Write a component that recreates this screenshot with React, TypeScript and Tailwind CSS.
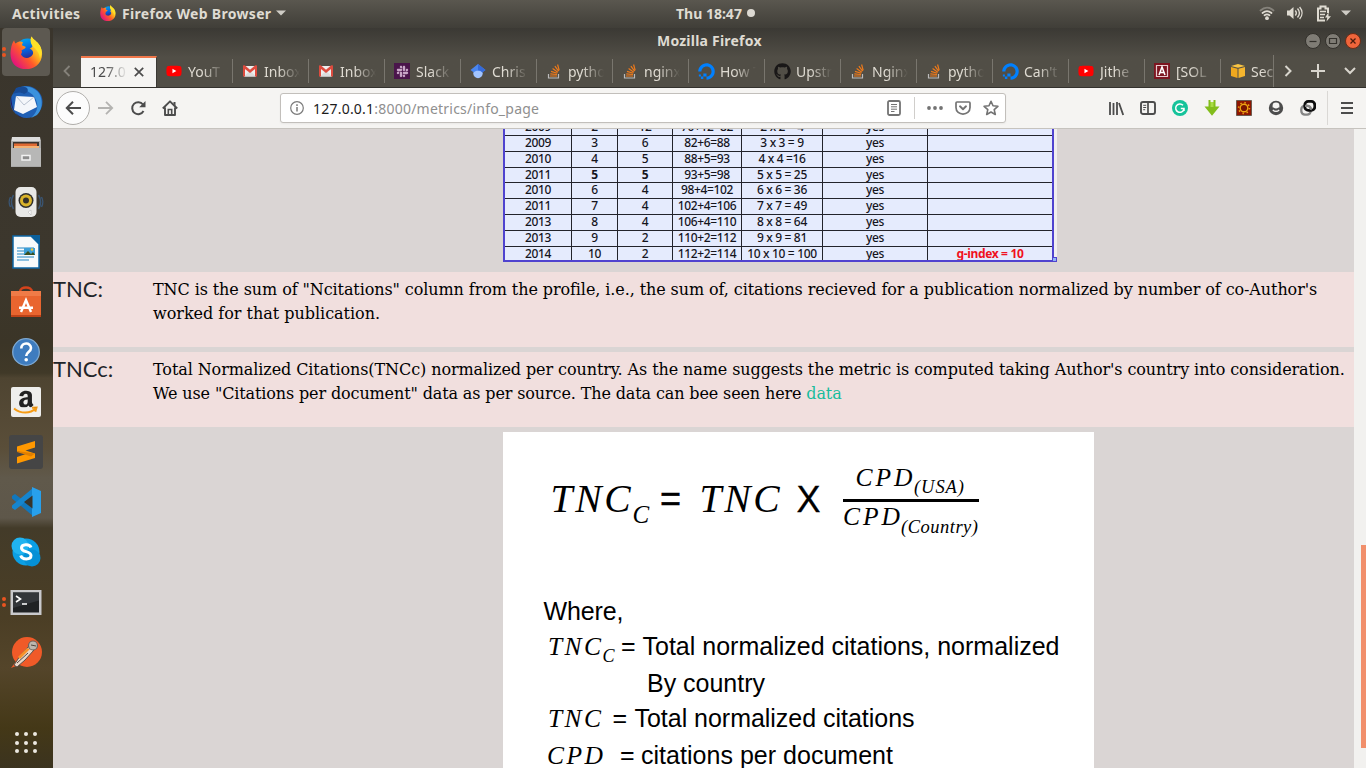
import React from "react";
import {
  FaAmazon,
  FaDigitalOcean,
  FaGithub,
  FaSlack,
  FaYoutube,
} from "react-icons/fa";

const FirefoxLogo = ({ size }: { size: number }) => (
  <svg width={size} height={size} viewBox="0 0 32 32">
    <defs>
      <linearGradient id="ffBody" x1="0.9" y1="0.1" x2="0.1" y2="0.8">
        <stop offset="0" stopColor="#fff44f" />
        <stop offset="0.35" stopColor="#ffb01c" />
        <stop offset="0.6" stopColor="#ff5a2a" />
        <stop offset="1" stopColor="#e3157a" />
      </linearGradient>
      <linearGradient id="ffGlobe" x1="0" y1="0" x2="0.3" y2="1">
        <stop offset="0" stopColor="#00b3f4" />
        <stop offset="0.6" stopColor="#0a5bd8" />
        <stop offset="1" stopColor="#3b1d7a" />
      </linearGradient>
    </defs>
    <circle cx="17" cy="14" r="11.5" fill="url(#ffGlobe)" />
    <path
      d="M21 0.5c1 3 5 4 8 9 4 7 2 15-3 19-6 5-15 5-21 0C0 24 0 16 1 12c.3-3 1.500-6 3-8 .2 1.500.8 2.500 1.600 3.200C8 5 11 5.200 12.500 6l-1 3 3.500 1.500c.7 1.500-2.500 2.500-4 3.500 1 .5.5 3-.5 3.500 2 5 9 5 11.500.5 1.200-3-.5-5-3-6 4-.5 3-4 1.500-7-.5-2-.300-3.500.5-4.500z"
      fill="url(#ffBody)"
    />
    <path d="M21 .5c1 3 5 4 8 9 2.500 5 1.500 9 0 12-.5-4-2-7-6-10.500-3-3-4-7-2-10.500z" fill="#ffe226" />
  </svg>
);

const Gmail = () => (
  <svg width="16" height="16" viewBox="0 0 16 16">
    <path d="M2 3h12v10.500H2z" fill="#eee" />
    <path d="M2 13.500l6-6 6 6z" fill="#dcdcdc" />
    <path d="M1 3.200v10.300h2V6l5 4 5-4v7.500h2V3.200C15 2 13.800 2 13 2.600L8 6.700 3 2.600C2.200 2 1 2 1 3.200z" fill="#dd4b3e" />
  </svg>
);

const Youtube = () => <FaYoutube size={16} color="#ff0000" className="bg-[linear-gradient(#fff,#fff)] bg-[length:6px_6px] bg-center bg-no-repeat" />;

const Slack = () => (
  <span className="flex size-4 items-center justify-center bg-[#4a154b]">
    <FaSlack size={13} color="#c9a8c8" />
  </span>
);

const Scholar = () => (
  <svg width="16" height="16" viewBox="0 0 16 16">
    <circle cx="8" cy="10.500" r="4.700" fill="#a0c3ff" />
    <path d="M8 1L.5 7l3.300 2.500C5 7 11 7 12.200 9.500L15.500 7z" fill="#4a86f0" />
    <path d="M8 1l7.500 6-3.300 2.500C11.500 7.800 10 7.300 8 7.200z" fill="#356ad8" />
  </svg>
);

const Stack = () => (
  <svg width="16" height="16" viewBox="0 0 16 16" fill="none">
    <path d="M2.500 11v4h10v-4" stroke="#bcbbbb" strokeWidth="1.200" />
    <path d="M4 13h7M4.300 10.800l6.700.7M5 8.400l6.300 1.900M6.600 5.600l5.200 3.600M8.900 3.200l3.700 5M11.600 1.500l1.600 5.800" stroke="#ef7a1a" strokeWidth="1.200" />
  </svg>
);

const Ocean = () => <FaDigitalOcean size={17} color="#0080ff" />;
const Github = () => <FaGithub size={17} color="#191717" />;

const RedA = () => (
  <svg width="16" height="16" viewBox="0 0 16 16">
    <path d="M0 0h16v16H0z" fill="#7c1520" />
    <path d="M2.500 2.500h11v11h-11z" fill="none" stroke="#e8c9ce" strokeWidth="1.200" />
    <path d="M5 12l3-8 3 8M6 9.500h4" fill="none" stroke="#fff" strokeWidth="1.500" />
  </svg>
);

const Cube = () => (
  <svg width="16" height="16" viewBox="0 0 16 16">
    <path d="M1 3l7-2 7 2-7 1.700z" fill="#f9c443" />
    <path d="M1 4l6.500 1.700V15L1 13z" fill="#f0a81e" />
    <path d="M15 4L8.500 5.700V15l6.500-2z" fill="#f5b52e" />
  </svg>
);

const tabs: { icon: () => React.ReactElement; label: string }[] = [
  { icon: Youtube, label: "YouT" },
  { icon: Gmail, label: "Inbox" },
  { icon: Gmail, label: "Inbox" },
  { icon: Slack, label: "Slack" },
  { icon: Scholar, label: "Chris" },
  { icon: Stack, label: "pytho" },
  { icon: Stack, label: "nginx" },
  { icon: Ocean, label: "How T" },
  { icon: Github, label: "Upstr" },
  { icon: Stack, label: "Nginx" },
  { icon: Stack, label: "pytho" },
  { icon: Ocean, label: "Can't" },
  { icon: Youtube, label: "Jithe" },
  { icon: RedA, label: "[SOL" },
];

const ui = "font-['Noto_Sans','Open_Sans',sans-serif]";

function TopBar() {
  return (
    <header className="flex h-[28px] shrink-0 items-center bg-linear-to-b from-[#5a574f] to-[#403e38] pb-[2px] text-[14px] font-bold text-[#dfdbd2]">
      <div className="flex w-[676px] items-center pl-[12px]">
        <span className="w-[88px] tracking-[0.35px]">Activities</span>
        <FirefoxLogo size={16} />
        <span className="w-[160px] pl-[6px] whitespace-nowrap tracking-[0.320px]">Firefox Web Browser</span>
        <svg width="10" height="6" viewBox="0 0 10 6"><path d="M0 0.500h10L5 5.500z" fill="#cfccc5" /></svg>
      </div>
      <div className="flex flex-1 items-center gap-[4px]">
        <span className="w-[67px] whitespace-nowrap">Thu 18:47</span>
        <span className="size-[8px] rounded-full bg-[#dcd9d2]" />
      </div>
      <div className="flex items-center pr-[15px]">
        <svg width="16" height="16" viewBox="0 0 16 16" fill="none" strokeLinecap="round">
          <path d="M1.500 5.500c4-3.700 9-3.700 13 0" stroke="#85827b" strokeWidth="1.800" />
          <path d="M3.500 8c3-2.500 6-2.500 9 0M5.500 10.300c1.800-1.300 3.200-1.300 5 0" stroke="#dfdbd2" strokeWidth="1.700" />
          <circle cx="8" cy="13.200" r="1.900" fill="#dfdbd2" />
        </svg>
        <svg className="ml-[11px]" width="17" height="16" viewBox="0 0 17 16" fill="none" stroke="#dfdbd2" strokeWidth="1.400">
          <path d="M1 5.500h2.500L7.500 2v12l-4-3.500H1z" fill="#dfdbd2" stroke="none" />
          <path d="M9.300 5.500c1.200 1.500 1.200 3.500 0 5M11.500 3.500c2.400 2.800 2.400 6.200 0 9M13.600 2c3.200 3.600 3.200 8.400 0 12" />
        </svg>
        <svg className="ml-[13px]" width="16" height="17" viewBox="0 0 16 17">
          <path d="M9 15.500H2v-12h2.500V1.500h5v2H12V8" fill="none" stroke="#dfdbd2" strokeWidth="2" />
          <path d="M4 6.500h6M4 9.500h5M4 12.500h4" stroke="#dfdbd2" strokeWidth="1.500" />
          <path d="M12.500 7.500L9 12.500h2.300L10.500 16.500l4.500-5.300h-2.500z" fill="#dfdbd2" />
        </svg>
        <svg className="ml-[9px]" width="10" height="6" viewBox="0 0 10 6"><path d="M0 .5h10L5 5.500z" fill="#cfccc5" /></svg>
      </div>
    </header>
  );
}

const dockIcons: React.ReactElement[] = [
  <FirefoxLogo size={33} />,
  <svg width="36" height="36" viewBox="0 0 36 36">
    <circle cx="18.500" cy="18" r="16" fill="#1f5fb4" />
    <path d="M9 5c7-5 19-2 23 6 3 7 2 15-3 20l-6 3c6-5 7-11 6-15C27 10 19 5 9 5z" fill="#3b92dd" />
    <path d="M3 12c1 9 1 15 9 21l8 2C9 33 1 25 3 12z" fill="#24185c" />
    <path d="M8 12l18 1 3 10-14 7-9-4z" fill="#f4f6fa" />
    <path d="M8 12l8 9 10-8" fill="none" stroke="#b9c2d0" strokeWidth="1" />
    <path d="M8 4c4-2 8-2 11 0 2 3 0 5-3 6-3-2-7-2-11 0z" fill="#174a94" />
  </svg>,
  <svg width="32" height="32" viewBox="0 0 32 32">
    <path d="M2 1h28l1 5H1z" fill="#ddd" /><path d="M1 5h30v26H1z" fill="#a9a9a8" />
    <path d="M3 6h26v7H3z" fill="#3c3530" /><path d="M4 7.500h23v3H4z" fill="#e06a33" /><path d="M4 10h25v2H4z" fill="#f3b274" />
    <path d="M1 12h30v18H1z" fill="#b7b7b6" /><path d="M12 19.500h8v4.500h-8z" fill="#8d8d8d" stroke="#f2f2f2" strokeWidth="1.500" />
  </svg>,
  <svg width="36" height="34" viewBox="0 0 36 34">
    <path d="M5.500 10c-3 5-3 9 0 14M2.500 12c-2 4-2 6 0 10M30.500 10c3 5 3 9 0 14M33.500 12c2 4 2 6 0 10" fill="none" stroke="#3a5573" strokeWidth="1.500" />
    <rect x="7.500" y="2" width="21" height="30" rx="5" fill="#e8e8e6" />
    <circle cx="18" cy="15.500" r="7.500" fill="#2f2f2d" /><circle cx="18" cy="15.500" r="6" fill="#d9b32a" /><circle cx="18" cy="15.500" r="3" fill="#33302a" />
    <path d="M20 27l3-2v5z" fill="#fff" stroke="#bbb" strokeWidth=".6" />
  </svg>,
  <svg width="28" height="34" viewBox="0 0 28 34">
    <path d="M1 1h18l8 8v24H1z" fill="#f8fafb" stroke="#0c65a4" strokeWidth="1.500" /><path d="M18 0h10v10z" fill="#0b609c" />
    <path d="M5 13h17M5 16h17M5 19h17M5 22h17M5 25h12" stroke="#68add8" strokeWidth="1.500" />
    <path d="M12 13h11v7H12z" fill="#3c9fd7" /><path d="M12 20l4-4 3 3 2-2 2 3z" fill="#385020" /><circle cx="20" cy="14.500" r="1.200" fill="#f5c33a" />
  </svg>,
  <svg width="32" height="34" viewBox="0 0 32 34">
    <path d="M10 7c0-6 12-6 12 0" fill="none" stroke="#d5431c" strokeWidth="2.500" /><path d="M1 6h30v26H1z" fill="#e9652f" /><path d="M1 6h30v5H1z" fill="#f07b47" /><path d="M1 30h30v2H1z" fill="#be4318" />
    <path d="M11 27l5-12 5 12M9 22.800h14" fill="none" stroke="#fff" strokeWidth="2.400" />
  </svg>,
  <svg width="30" height="30" viewBox="0 0 30 30">
    <circle cx="15" cy="15" r="13.300" fill="#3e7cbf" stroke="#7ea9d2" strokeWidth="1.300" />
    <path d="M10.300 11.500c0-6.500 9.700-6.500 9.700-.5 0 4-4.800 4-4.800 8" fill="none" stroke="#fff" strokeWidth="2.600" /><circle cx="15.200" cy="22.700" r="1.800" fill="#fff" />
  </svg>,
  <span className="flex size-[30px] items-center justify-center rounded-[2px] bg-[#eeeeec]">
    <FaAmazon size={26} color="#222" className="[clip-path:inset(0_0_30%_0)]" />
    <svg className="-ml-[27px]" width="28" height="28" viewBox="0 0 28 28" fill="none">
      <path d="M2 20.500c7 5.500 16 5.500 22-.3M20 19.800l4.500-.3-1.200 4.200" stroke="#f59b14" strokeWidth="2" />
    </svg>
  </span>,
  <span className="flex size-[34px] items-center justify-center rounded-[3px] bg-[#454545]">
    <svg width="20" height="24" viewBox="0 0 20 24">
      <path d="M1 6.500L19 1v6.500L9.500 10.500 19 13.500V18L1 23.500V17l9-3L1 11z" fill="#ff9800" />
      <path d="M1 11l18 2.500-4 3L1 12z" fill="#e07f00" />
    </svg>
  </span>,
  <svg width="30" height="30" viewBox="0 0 30 30">
    <path d="M1 9l3-2 18 14v8L1 11.500z" fill="#1177bd" /><path d="M1 21l3 2L22 9V1L1 18.500z" fill="#1585cf" /><path d="M21 0l9 4v22l-9 4z" fill="#28a0ec" /><path d="M21.500 8.500v13L13 15z" fill="#39342b" />
  </svg>,
  <svg width="30" height="30" viewBox="0 0 30 30">
    <circle cx="15" cy="15" r="13.500" fill="#0c9fe4" /><circle cx="9" cy="9" r="8.500" fill="#20b3f0" /><circle cx="21" cy="21" r="8.500" fill="#0590d6" />
    <path d="M20 10.500c-1.500-4-9.500-3.500-9.500.5 0 4.700 9.500 2.500 9.500 7.500 0 4.500-9 4.500-10.300 0" fill="none" stroke="#fff" strokeWidth="3" />
  </svg>,
  <svg className="mt-[2px]" width="32" height="28" viewBox="0 0 32 28">
    <path d="M.5 1h31v25H.5z" fill="#c9c9cc" /><path d="M3 3.500h26v20H3z" fill="#202224" /><path d="M3 3.500h26v8L3 19z" fill="#33363a" />
    <path d="M6 7l4.500 3L6 13M12 15h5" fill="none" stroke="#fff" strokeWidth="1.600" />
  </svg>,
  <svg className="mt-[2px]" width="34" height="34" viewBox="0 0 34 34">
    <circle cx="18" cy="16" r="15" fill="#f05a28" /><path d="M2 32l6-8 4 4z" fill="#f05a28" />
    <path d="M5 29l6-9L20 10l5 4-9 10-8 7z" fill="#e9d6c6" stroke="#58504a" strokeWidth="1" />
    <path d="M9 21l9-9 3 1-10 10z" fill="#f7922a" /><circle cx="24" cy="9.500" r="4.500" fill="#bdb6ae" stroke="#6b625b" strokeWidth="1.200" /><path d="M22 9l5 1M8 27l11-10" stroke="#4e4640" strokeWidth="1" />
  </svg>,
];

function Dock() {
  return (
    <nav className="flex w-[53px] shrink-0 flex-col bg-[linear-gradient(180deg,#3a352c_0px,#3c372d_230px,#3b3527_315px,#403928_345px,#4e4431_350px,#5a4e39_420px,#60594b_450px,#5e574a_490px,#433b29_500px,#4b3e25_590px,#54452a_640px,#443817_700px,#3b331f_740px)]">
      {dockIcons.map((icon, i) => (
        <div key={i} className={i === 0 ? "flex h-[49px] shrink-0 items-start" : "flex h-[50px] shrink-0 items-center"}>
          <span className="flex w-[2px] flex-col" />
          <div className={i === 0 ? "flex size-[48px] items-center rounded-[4px] bg-[#5d5951]" : "flex size-[48px] items-center"}>
            <span className="flex w-[4px] flex-col gap-[2px]">
              {(i === 0 || i === 11) && (
                <>
                  <i className="size-[4px] rounded-full bg-[#ea5420]" />
                  <i className="size-[4px] rounded-full bg-[#ea5420]" />
                </>
              )}
            </span>
            <span className="flex w-[40px] items-center justify-center">{icon}</span>
          </div>
        </div>
      ))}
      <div className="mt-[55px] ml-[15px] grid w-[22px] grid-cols-3 gap-[4.500px]">
        {Array.from({ length: 9 }, (_, i) => (
          <i key={i} className="size-[4px] rounded-full bg-[#ece9e2]" />
        ))}
      </div>
    </nav>
  );
}

function TitleAndTabs() {
  return (
    <div className="flex h-[60px] shrink-0 flex-col border-b border-[#33312d] bg-linear-to-b from-[#3b3934] from-0% to-[#514e46] to-50% text-[#dfdbd2]">
      <div className="flex h-[27px] items-center pb-[2px]">
        <span className="w-[604px] shrink-0" />
        <span className="w-[648px] shrink-0 text-[14px] font-bold whitespace-nowrap tracking-[0.220px]">Mozilla Firefox</span>
        <div className="flex shrink-0 gap-[4px]">
          <svg width="16" height="16" viewBox="0 0 16 16"><circle cx="8" cy="8" r="7.500" fill="#7f7c75" stroke="#33312c" /><path d="M4.500 8.500h7" stroke="#33312c" strokeWidth="1.200" /></svg>
          <svg width="16" height="16" viewBox="0 0 16 16"><circle cx="8" cy="8" r="7.500" fill="#7f7c75" stroke="#33312c" /><path d="M4.500 5.500h7v5h-7z" fill="none" stroke="#33312c" strokeWidth="1.200" /></svg>
          <svg width="16" height="16" viewBox="0 0 16 16"><circle cx="8" cy="8" r="7.500" fill="#f0653b" stroke="#6b2c17" /><path d="M5.500 5.500l5 5M10.500 5.500l-5 5" stroke="#4c1c0d" strokeWidth="1.300" /></svg>
        </div>
      </div>
      <div className="flex h-[32px] text-[14px]">
        <div className="flex w-[28px] shrink-0 items-center justify-center">
          <svg width="8" height="12" viewBox="0 0 8 12"><path d="M6.500 1L1.500 6l5 5" fill="none" stroke="#85827b" strokeWidth="1.800" /></svg>
        </div>
        <div className="mt-px flex w-[76px] shrink-0 items-center border-t-2 border-r border-t-[#f0774a] border-r-[#3b3934] bg-[#f5f4f2] pb-[2px] pl-[9px] text-[#4a4a4a]">
          <span className="w-[38px] whitespace-nowrap [mask-image:linear-gradient(90deg,#000_40%,transparent_100%)]">127.0</span>
          <svg className="ml-[6px]" width="10" height="10" viewBox="0 0 10 10"><path d="M.8.8l8.400 8.400M9.200.8L.8 9.200" stroke="#4c4c4c" strokeWidth="1.700" /></svg>
        </div>
        {tabs.map(({ icon: Icon, label }, i) => (
          <div key={i} className="flex w-[76px] shrink-0 items-center">
            <div className="flex w-[75px] items-center pl-[9px]">
              <span className="flex w-[22px] items-center"><Icon /></span>
              <span className="w-[36px] whitespace-nowrap [mask-image:linear-gradient(90deg,#000_40%,transparent_100%)]">{label}</span>
            </div>
            <span className="h-[24px] w-px bg-[#79766e]" />
          </div>
        ))}
        <div className="flex w-[53px] shrink-0 items-center border-r border-[#79766e] pl-[9px]">
          <span className="flex w-[21px] items-center"><Cube /></span>
          <span className="w-[22px] whitespace-nowrap [mask-image:linear-gradient(90deg,#000_50%,#0006_100%)]">Sec</span>
        </div>
        <div className="flex flex-1 items-center pl-[10px] text-[#d8d5cd]">
          <svg width="9" height="12" viewBox="0 0 9 12"><path d="M1.500 1l5 5-5 5" fill="none" stroke="#d8d5cd" strokeWidth="2" /></svg>
          <svg className="ml-[18px]" width="14" height="14" viewBox="0 0 14 14"><path d="M7 0v14M0 7h14" stroke="#d8d5cd" strokeWidth="2" /></svg>
          <svg className="ml-[19px]" width="12" height="8" viewBox="0 0 12 8"><path d="M1 1l5 5 5-5" fill="none" stroke="#d8d5cd" strokeWidth="2" /></svg>
        </div>
      </div>
    </div>
  );
}

function Toolbar() {
  return (
    <div className="flex h-[41px] shrink-0 items-center border-b border-[#c6c3be] bg-[#f5f4f2] pl-[3px]">
      <span className="flex size-[34px] items-center justify-center rounded-full border border-[#b0aeab] bg-[#fcfcfc]">
        <svg width="16" height="14" viewBox="0 0 16 14"><path d="M8 .8L1.800 7 8 13.200M2 7h14" fill="none" stroke="#4c4c4c" strokeWidth="2" /></svg>
      </span>
      <svg className="ml-[8px]" width="16" height="14" viewBox="0 0 16 14"><path d="M8 .8L14.200 7 8 13.200M14 7H0" fill="none" stroke="#b4b3b1" strokeWidth="1.800" /></svg>
      <svg className="ml-[16px]" width="16" height="16" viewBox="0 0 16 16"><path d="M13.500 11A6 6 0 1 1 13 4.500" fill="none" stroke="#4c4c4c" strokeWidth="2" /><path d="M15.500 1v6.300H9.200z" fill="#4c4c4c" /></svg>
      <svg className="ml-[16px]" width="16" height="16" viewBox="0 0 16 16"><path d="M.8 8.500L8 1.300l7.200 7.200M3 7.500V15h10V7.500" fill="none" stroke="#4c4c4c" strokeWidth="1.900" strokeLinejoin="round" /><path d="M6.300 14.500v-5h3.400v5" fill="none" stroke="#4c4c4c" strokeWidth="1.600" /><path d="M11.500 2h2v4l-2-2z" fill="#4c4c4c" /></svg>
      <div className="ml-[102px] flex h-[30px] w-[726px] items-center rounded-[3px] border border-[#c2bfbb] bg-white pl-[9px] shadow-xs">
        <svg width="14" height="14" viewBox="0 0 14 14"><circle cx="7" cy="7" r="6.300" fill="none" stroke="#7b7b7b" strokeWidth="1.200" /><path d="M7 6v4.500M7 3.300v1.600" stroke="#7b7b7b" strokeWidth="1.500" /></svg>
        <span className="ml-[9px] w-[574px] text-[14px] tracking-[0.220px] whitespace-nowrap text-[#8f8f8f]"><b className="font-normal text-[#1c1c1c]">127.0.0.1</b>:8000/metrics/info_page</span>
        <svg width="14" height="16" viewBox="0 0 14 16"><rect x="1" y="1" width="12" height="14" rx="1.500" fill="none" stroke="#737373" strokeWidth="1.800" /><path d="M4 4.500h6M4 6.800h6M4 9.200h6M4 11.500h3.500" stroke="#737373" strokeWidth="1" /></svg>
        <span className="ml-[13px] h-[22px] w-px bg-[#d0cecb]" />
        <svg className="ml-[12px]" width="16" height="4" viewBox="0 0 16 4" fill="#737373"><circle cx="2" cy="2" r="1.900" /><circle cx="8" cy="2" r="1.900" /><circle cx="14" cy="2" r="1.900" /></svg>
        <svg className="ml-[12px]" width="16" height="14" viewBox="0 0 16 14" fill="none" stroke="#737373" strokeLinecap="round" strokeLinejoin="round"><path d="M2 1h12c.6 0 1 .4 1 1v4.500c0 8.700-14 8.700-14 0V2c0-.6.4-1 1-1z" strokeWidth="1.700" /><path d="M5 5.300l3 2.900 3-2.900" strokeWidth="1.900" /></svg>
        <svg className="ml-[12px]" width="16" height="16" viewBox="0 0 16 16"><path d="M8 1.300l2 4.500 4.900.5-3.700 3.300 1.100 4.900L8 12l-4.300 2.500 1.100-4.900L1.100 6.300 6 5.800z" fill="none" stroke="#737373" strokeWidth="1.600" strokeLinejoin="round" /></svg>
      </div>
      <div className="ml-[102px] flex items-center gap-[16px]">
        <svg width="16" height="16" viewBox="0 0 16 16"><path d="M2 2v13M5.500 3v12M9 2v13M11 3l4.200 12" stroke="#4c4c4c" strokeWidth="1.800" /></svg>
        <svg width="16" height="16" viewBox="0 0 16 16"><rect x="1" y="2" width="14" height="12" rx="2" fill="none" stroke="#4c4c4c" strokeWidth="1.900" /><path d="M8 2v12" stroke="#4c4c4c" strokeWidth="1.700" /><path d="M3.200 5.300h3M3.200 7.500h3M3.200 9.700h2" stroke="#4c4c4c" strokeWidth="1" /></svg>
        <svg width="16" height="16" viewBox="0 0 16 16"><circle cx="8" cy="8" r="8" fill="#15c39a" /><path d="M11 5.300A4.200 4.200 0 1 0 12 9M8.800 8.500H12V11" fill="none" stroke="#fff" strokeWidth="1.500" /></svg>
        <svg width="16" height="16" viewBox="0 0 16 16"><path d="M4.500 0v6.500H.5L8 15.800 15.500 6.500h-4V0h-2v2h-3V0z" fill="#83bd1c" /><path d="M6.500 2h3v5h-3z" fill="#a8dc45" /></svg>
        <svg width="16" height="16" viewBox="0 0 16 16"><path d="M.5.500h15v15H.5z" fill="#8e1500" stroke="#6b5a50" /><circle cx="8" cy="8" r="3.800" fill="#7a1500" stroke="#eea512" strokeWidth="1.400" /><circle cx="8" cy="8" r="5.400" fill="none" stroke="#eea512" strokeWidth="1.600" strokeDasharray="1.400 2.800" /></svg>
        <svg width="16" height="16" viewBox="0 0 16 16"><circle cx="8" cy="8" r="7.200" fill="#4c4c4c" /><rect x="4.600" y="2.600" width="6.800" height="7.600" rx="3.200" fill="#f5f4f2" /><path d="M3 7.500h2.500c1.500 1.200 3.500 1.200 5 0H13v1.500c-1 .3-2 1-2.500 1.200h-5C5 10 4 9.300 3 9z" fill="#4c4c4c" /><path d="M4.800 9.800c1.800 2.200 4.600 2.200 6.400 0" fill="none" stroke="#f5f4f2" strokeWidth="1.300" /></svg>
        <svg width="16" height="16" viewBox="0 0 16 16" fill="none"><rect x="1.300" y="5.800" width="9.400" height="8.800" rx="3.500" stroke="#858585" strokeWidth="2.300" /><rect x="4.800" y="1.400" width="10" height="9" rx="3.500" stroke="#0c0c0d" strokeWidth="2.800" /><path d="M5 5.800h3c2.500.3 3 2 2.700 4.200" stroke="#858585" strokeWidth="2.200" /></svg>
      </div>
      <span className="ml-[11px] h-[34px] w-px bg-[#dad8d5]" />
      <svg className="ml-[13px]" width="12" height="12" viewBox="0 0 12 12"><path d="M0 1h12M0 6h12M0 11h12" stroke="#4c4c4c" strokeWidth="2" /></svg>
    </div>
  );
}

const rows: string[][] = [
  ["2009", "3", "6", "82+6=88", "3 x 3 = 9", "yes", ""],
  ["2010", "4", "5", "88+5=93", "4 x 4 =16", "yes", ""],
  ["2011", "5", "5", "93+5=98", "5 x 5 = 25", "yes", ""],
  ["2010", "6", "4", "98+4=102", "6 x 6 = 36", "yes", ""],
  ["2011", "7", "4", "102+4=106", "7 x 7 = 49", "yes", ""],
  ["2013", "8", "4", "106+4=110", "8 x 8 = 64", "yes", ""],
  ["2013", "9", "2", "110+2=112", "9 x 9 = 81", "yes", ""],
  ["2014", "10", "2", "112+2=114", "10 x 10 = 100", "yes", "g-index = 10"],
];

const rowGrid = "grid shrink-0 grid-cols-[67px_46px_55px_69px_81px_105px_124px]";

function Row({ cells, className }: { cells: string[]; className: string }) {
  const boldRow = cells[1] === "5";
  return (
    <div className={`${rowGrid} ${className}`}>
      {cells.map((c, i) => (
        <span
          key={i}
          className={`flex items-center justify-center pb-[1px] leading-[12px] whitespace-nowrap ${i < 6 ? "border-r border-[#22232b]" : "font-bold text-[#f01020]"} ${boldRow && (i === 1 || i === 2) ? "font-bold" : ""}`}
        >
          {c}
        </span>
      ))}
    </div>
  );
}

function IndexTable() {
  return (
    <div className="relative ml-[450px] flex h-[133px] w-[554px] shrink-0 bg-[#f0eeef]">
      <div className="flex w-[551px] flex-col overflow-hidden border-x-2 border-b-2 border-[#4f43cf] bg-[#e5ebfd] font-['Noto_Sans','Open_Sans',sans-serif] text-[12px] font-medium tracking-[-0.350px] text-[#15151d]">
        <div className="flex h-[7px] shrink-0 flex-col justify-end overflow-hidden border-b border-[#22232b]">
          <Row cells={["2009", "2", "12", "70+12=82", "2 x 2 = 4", "yes", ""]} className="h-[15px]" />
        </div>
        {rows.map((r, i) => (
          <Row key={i} cells={r} className={i === 7 ? "h-[15px]" : i === 2 ? "h-[15px] border-b border-[#22232b]" : "h-[16px] border-b border-[#22232b]"} />
        ))}
      </div>
      <i className="absolute right-0 bottom-0 size-[5px] border border-[#4f43cf] bg-[#8fb4f5]" />
    </div>
  );
}

function Entry({ term, children }: { term: string; children: React.ReactNode }) {
  return (
    <section className="mb-[5px] flex h-[75px] shrink-0 bg-[#f1dfde] pt-[6px]">
      <h4 className="-mt-[2px] w-[100px] shrink-0 font-['Lato',sans-serif] text-[22px] leading-[26px] text-[#212529]">{term}</h4>
      <p className="font-['DejaVu_Serif',serif] text-[16px] leading-[24px] tracking-[-0.090px] whitespace-nowrap text-black">{children}</p>
    </section>
  );
}

function FormulaFigure() {
  const it = { fontFamily: "Liberation Serif", fontStyle: "italic" } as const;
  const sans = { fontFamily: "Liberation Sans" } as const;
  return (
    <svg className="ml-[450px] shrink-0 bg-white" width="591" height="336" viewBox="503 432 591 336" fill="#000">
      <g {...it} fontSize="39.500">
        <text x="550.500" y="512" textLength="80">TNC</text>
        <text x="699.500" y="512" textLength="80">TNC</text>
        <text x="632.500" y="523" fontSize="25">C</text>
        <g fontSize="25.500">
          <text x="855.500" y="486" textLength="57">CPD</text>
          <text x="843" y="525" textLength="57">CPD</text>
        </g>
        <g fontSize="18.500">
          <text x="914" y="493" textLength="50">(USA)</text>
          <text x="901" y="533" textLength="77">(Country)</text>
        </g>
        <g fontSize="25.500">
          <text x="548" y="655" textLength="53">TNC</text>
          <text x="602.500" y="662" fontSize="18">C</text>
          <text x="548" y="727" textLength="53">TNC</text>
          <text x="547" y="764" textLength="56">CPD</text>
        </g>
      </g>
      <g {...sans} fontSize="36">
        <text x="660" y="511" stroke="#000" strokeWidth="0.500">=</text>
        <text x="796.500" y="512" stroke="#000" strokeWidth="0.300">X</text>
      </g>
      <path d="M843 499h136v3H843z" />
      <g {...sans} fontSize="25">
        <text x="543.500" y="620" textLength="80">Where,</text>
        <text x="621" y="655">=</text>
        <text x="642.500" y="655" textLength="417">Total normalized citations, normalized</text>
        <text x="647" y="692" textLength="118">By country</text>
        <text x="612.500" y="727">=</text>
        <text x="634.500" y="727" textLength="280">Total normalized citations</text>
        <text x="620" y="764">=</text>
        <text x="641" y="764" textLength="252">citations per document</text>
      </g>
    </svg>
  );
}

export default function App() {
  return (
    <div className={`flex h-[768px] w-[1366px] flex-col overflow-hidden ${ui}`}>
      <TopBar />
      <div className="flex h-[740px]">
        <Dock />
        <main className="flex w-[1313px] flex-col">
          <TitleAndTabs />
          <Toolbar />
          <div className="flex min-h-0 flex-1">
            <div className="flex w-[1301px] flex-col overflow-hidden bg-[#dad5d4]">
              <IndexTable />
              <div className="h-[10px] shrink-0" />
              <Entry term="TNC:">
                TNC is the sum of "Ncitations" column from the profile, i.e., the sum of, citations recieved for a publication normalized by number of co-Author's
                <br />
                <span className="tracking-[-0.020px]">worked for that publication.</span>
              </Entry>
              <Entry term="TNCc:">
                Total Normalized Citations(TNCc) normalized per country. As the name suggests the metric is computed taking Author's country into consideration.
                <br />
                <span className="tracking-[-0.125px]">
                  We use "Citations per document" data as per source. The data can bee seen here <a className="text-[#18bc9c]">data</a>
                </span>
              </Entry>
              <FormulaFigure />
            </div>
            <div className="flex w-[12px] justify-end bg-[#f2f1ef] pt-[416px]">
              <span className="h-[203px] w-[5px] bg-[#f18f6b]" />
            </div>
          </div>
        </main>
      </div>
    </div>
  );
}
